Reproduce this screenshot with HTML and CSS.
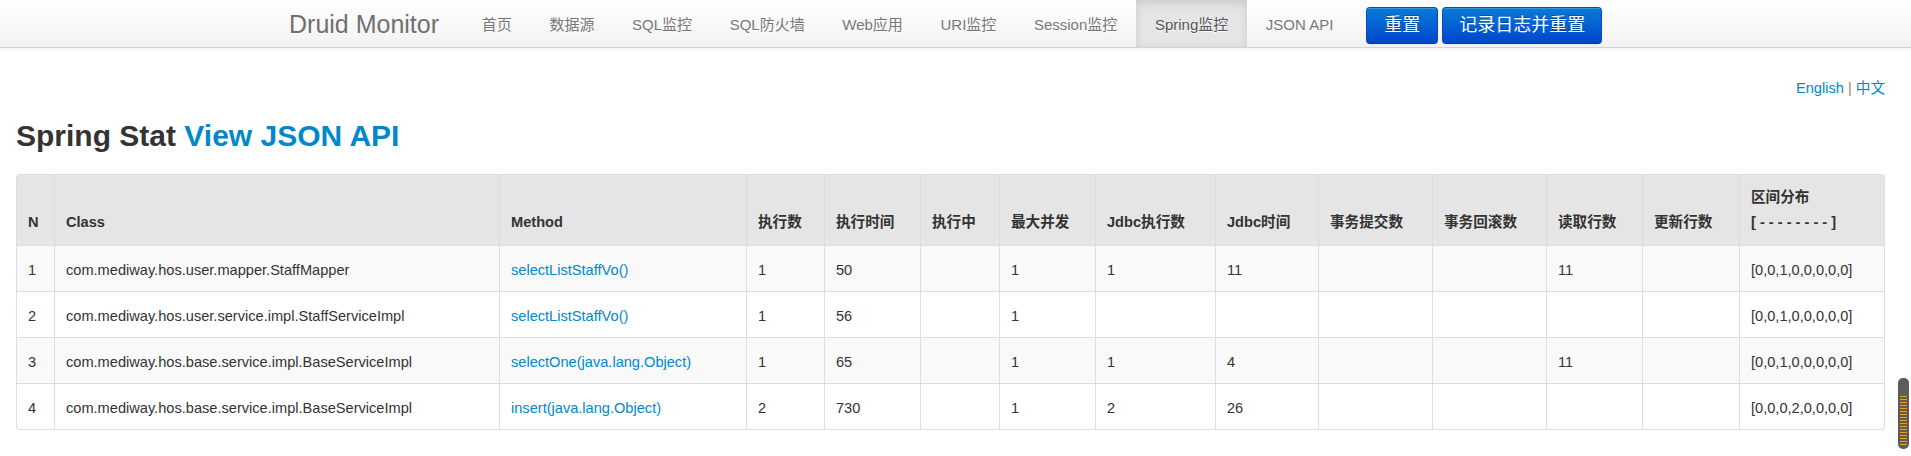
FILE: index.html
```html
<!DOCTYPE html>
<html lang="zh-CN">
<head>
<meta charset="utf-8">
<title>Druid Monitor</title>
<link rel="stylesheet" href="styles.css">
</head>
<body>
<div class="navbar">
  <div class="nav-container">
    <a class="brand" href="#">Druid Monitor</a>
    <ul class="nav">
      <li><a href="#">首页</a></li>
      <li><a href="#">数据源</a></li>
      <li><a href="#">SQL监控</a></li>
      <li><a href="#">SQL防火墙</a></li>
      <li><a href="#">Web应用</a></li>
      <li><a href="#">URI监控</a></li>
      <li><a href="#">Session监控</a></li>
      <li class="active"><a href="#">Spring监控</a></li>
      <li><a href="#">JSON API</a></li>
    </ul>
    <div class="nav-actions">
      <button class="btn-primary" type="button">重置</button>
      <button class="btn-primary" type="button">记录日志并重置</button>
    </div>
  </div>
</div>

<div class="page">
  <div class="lang"><a href="#">English</a> <span class="sep">|</span> <a href="#">中文</a></div>
  <h3 class="title">Spring Stat <a href="#">View JSON API</a></h3>

  <table class="stat-table">
    <thead>
      <tr>
        <th>N</th>
        <th>Class</th>
        <th>Method</th>
        <th>执行数</th>
        <th>执行时间</th>
        <th>执行中</th>
        <th>最大并发</th>
        <th>Jdbc执行数</th>
        <th>Jdbc时间</th>
        <th>事务提交数</th>
        <th>事务回滚数</th>
        <th>读取行数</th>
        <th>更新行数</th>
        <th>区间分布<br>[ - - - - - - - - ]</th>
      </tr>
    </thead>
    <tbody>
      <tr>
        <td>1</td>
        <td>com.mediway.hos.user.mapper.StaffMapper</td>
        <td><a href="#">selectListStaffVo()</a></td>
        <td>1</td>
        <td>50</td>
        <td></td>
        <td>1</td>
        <td>1</td>
        <td>11</td>
        <td></td>
        <td></td>
        <td>11</td>
        <td></td>
        <td>[0,0,1,0,0,0,0,0]</td>
      </tr>
      <tr>
        <td>2</td>
        <td>com.mediway.hos.user.service.impl.StaffServiceImpl</td>
        <td><a href="#">selectListStaffVo()</a></td>
        <td>1</td>
        <td>56</td>
        <td></td>
        <td>1</td>
        <td></td>
        <td></td>
        <td></td>
        <td></td>
        <td></td>
        <td></td>
        <td>[0,0,1,0,0,0,0,0]</td>
      </tr>
      <tr>
        <td>3</td>
        <td>com.mediway.hos.base.service.impl.BaseServiceImpl</td>
        <td><a href="#">selectOne(java.lang.Object)</a></td>
        <td>1</td>
        <td>65</td>
        <td></td>
        <td>1</td>
        <td>1</td>
        <td>4</td>
        <td></td>
        <td></td>
        <td>11</td>
        <td></td>
        <td>[0,0,1,0,0,0,0,0]</td>
      </tr>
      <tr>
        <td>4</td>
        <td>com.mediway.hos.base.service.impl.BaseServiceImpl</td>
        <td><a href="#">insert(java.lang.Object)</a></td>
        <td>2</td>
        <td>730</td>
        <td></td>
        <td>1</td>
        <td>2</td>
        <td>26</td>
        <td></td>
        <td></td>
        <td></td>
        <td></td>
        <td>[0,0,0,2,0,0,0,0]</td>
      </tr>
    </tbody>
  </table>
</div>

<div class="scroll-thumb"><div class="scroll-grip"></div></div>
</body>
</html>
```

FILE: styles.css
```css
html, body {
  margin: 0;
  padding: 0;
  overflow: hidden;
  background: #fff;
}

body {
  font-family: "Liberation Sans", Arial, "Noto Sans CJK SC", sans-serif;
  font-size: 14.6px;
  line-height: 20px;
  color: #333;
}

a {
  color: #0088cc;
  text-decoration: none;
}

/* ---------- navbar ---------- */
.navbar {
  height: 47px;
  background: linear-gradient(to bottom, #ffffff, #f2f2f2);
  border-bottom: 1px solid #d4d4d4;
  box-shadow: 0 1px 4px rgba(0, 0, 0, 0.065);
}

.nav-container {
  width: 1383px;
  margin: 0 auto;
  display: flex;
  align-items: flex-start;
  height: 47px;
}

.brand {
  display: block;
  padding: 2px 25px 0;
  line-height: 45px;
  font-size: 25px;
  color: #6f6f6f;
  text-shadow: 0 1px 0 #fff;
}

.nav {
  display: flex;
  list-style: none;
  margin: 0 0 0 -1px;
  padding: 0;
}

.nav li a {
  display: block;
  height: 45px;
  padding: 2px 18.8px 0;
  line-height: 45px;
  font-size: 15px;
  color: #777;
  text-shadow: 0 1px 0 #fff;
}

.nav li.active a {
  color: #555;
  background-color: #e5e5e5;
  box-shadow: inset 0 3px 8px rgba(0, 0, 0, 0.125);
}

.nav-actions {
  display: flex;
  gap: 4px;
  margin-left: 14px;
  padding-top: 7px;
}

.btn-primary {
  height: 37px;
  padding: 0 17px;
  font-family: "Liberation Sans", "Noto Sans CJK SC", sans-serif;
  font-size: 18px;
  line-height: 35px;
  color: #fff;
  text-shadow: 0 -1px 0 rgba(0, 0, 0, 0.25);
  background: linear-gradient(to bottom, #0a7ad8, #0046cc);
  border: 1px solid #0a4cb0;
  border-bottom-color: #063a94;
  border-radius: 4px;
  box-shadow: inset 0 1px 0 rgba(255, 255, 255, 0.2), 0 1px 2px rgba(0, 0, 0, 0.05);
  cursor: pointer;
}

.btn-primary + .btn-primary {
  padding: 0 16px;
}

/* ---------- page ---------- */
.page {
  padding: 0 26px 0 16px;
}

.lang {
  margin-top: 30px;
  text-align: right;
  line-height: 20px;
}

.lang .sep {
  color: #a8844c;
}

.title {
  margin: 18px 0 18px;
  font-size: 30px;
  line-height: 40px;
  font-weight: bold;
  color: #333;
}

/* ---------- table ---------- */
.stat-table {
  width: 100%;
  box-sizing: border-box;
  table-layout: fixed;
  border-collapse: separate;
  border-spacing: 0;
  border: 1px solid #ddd;
  border-left: 0;
  border-radius: 4px;
}

.stat-table th,
.stat-table td {
  box-sizing: border-box;
  padding: 10px 11px;
  line-height: 25px;
  text-align: left;
  border-left: 1px solid #ddd;
  white-space: nowrap;
}

.stat-table th {
  vertical-align: bottom;
  font-weight: bold;
  background: #e5e5e5;
  color: #333;
}

.stat-table td {
  vertical-align: top;
  padding-top: 11.5px;
  padding-bottom: 8.5px;
  border-top: 1px solid #ddd;
}

.stat-table tbody tr:nth-child(odd) td {
  background: #f9f9f9;
}

.stat-table th:first-child { border-top-left-radius: 4px; }
.stat-table th:last-child { border-top-right-radius: 4px; }
.stat-table tbody tr:last-child td:first-child { border-bottom-left-radius: 4px; }
.stat-table tbody tr:last-child td:last-child { border-bottom-right-radius: 4px; }

.stat-table th:nth-child(1) { width: 38px; }
.stat-table th:nth-child(2) { width: 445px; }
.stat-table th:nth-child(3) { width: 247px; }
.stat-table th:nth-child(4) { width: 78px; }
.stat-table th:nth-child(5) { width: 96px; }
.stat-table th:nth-child(6) { width: 79px; }
.stat-table th:nth-child(7) { width: 96px; }
.stat-table th:nth-child(8) { width: 120px; }
.stat-table th:nth-child(9) { width: 103px; }
.stat-table th:nth-child(10) { width: 114px; }
.stat-table th:nth-child(11) { width: 114px; }
.stat-table th:nth-child(12) { width: 96px; }
.stat-table th:nth-child(13) { width: 97px; }
.stat-table th:nth-child(14) { width: 145px; }

/* ---------- scrollbar thumb overlay ---------- */
.scroll-thumb {
  position: fixed;
  right: 2px;
  top: 378px;
  width: 11px;
  height: 71px;
  background: #5c5c5c;
  border-radius: 5px;
  box-sizing: border-box;
  padding: 18px 2px 3px;
}

.scroll-grip {
  height: 100%;
  background: repeating-linear-gradient(to bottom, #f4a21c 0, #f4a21c 1.5px, #6a5a40 1.5px, #6a5a40 3px);
}
```
